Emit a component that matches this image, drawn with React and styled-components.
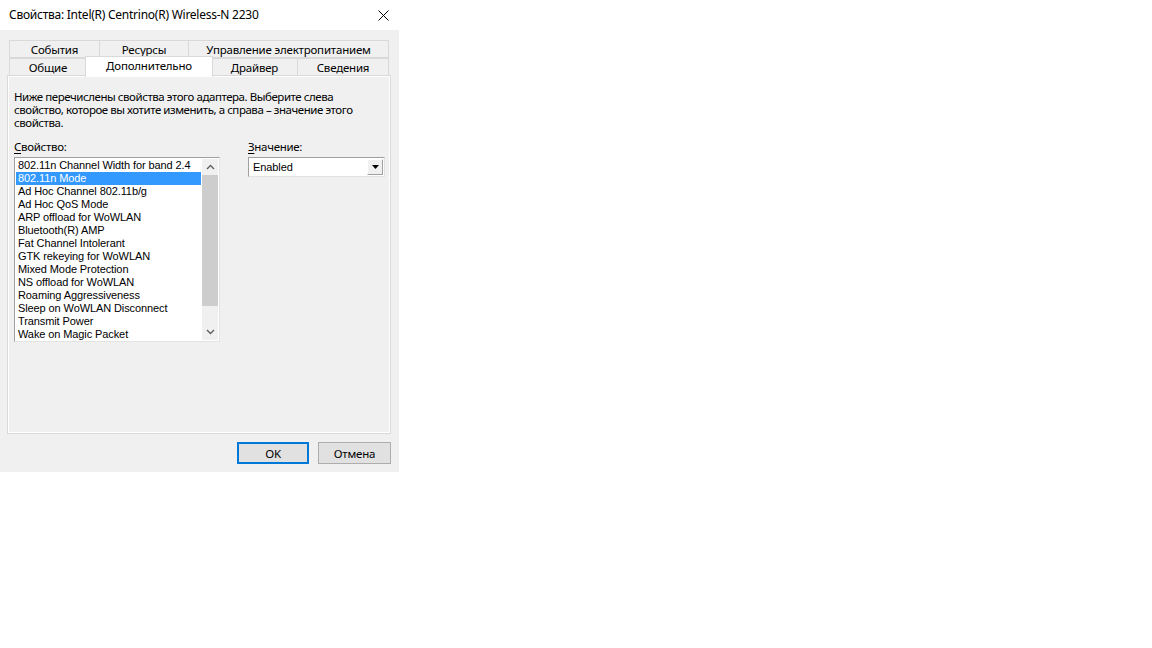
import React from "react";
import styled, { createGlobalStyle } from "styled-components";

const Global = createGlobalStyle`
  html, body { margin: 0; padding: 0; background: #ffffff; }
  body { font-family: "Noto Sans", "Liberation Sans", sans-serif; }
`;

const UI = `"Noto Sans", "Open Sans", "Liberation Sans", sans-serif`;
const DLG = `"Liberation Sans", Arial, sans-serif`;

const Window = styled.div`
  width: 399px;
  height: 472px;
  background: #f0f0f0;
  display: flex;
  flex-direction: column;
  box-sizing: border-box;
  font-family: ${UI};
  font-size: 11.5px;
  color: #000;
`;

const TitleBar = styled.div`
  height: 30px;
  background: #ffffff;
  display: flex;
  align-items: center;
  justify-content: space-between;
  padding: 0 9px;
  flex-shrink: 0;
`;

const TitleText = styled.span`
  font-size: 12px;
  letter-spacing: -0.25px;
  line-height: 16px;
`;

const CloseBtn = styled.div`
  width: 12px;
  height: 12px;
  margin-right: 1px;
  display: flex;
  align-items: center;
  justify-content: center;
`;

const Body = styled.div`
  flex: 1;
  display: flex;
  flex-direction: column;
  padding: 10px 8px 0 7px;
`;

const Tabs = styled.div`
  display: flex;
  flex-direction: column;
  padding-left: 2px;
  position: relative;
  z-index: 1;
`;

const TabRow = styled.div`
  display: flex;
  height: 18px;
  width: 380px;
`;

const Tab = styled.div`
  width: ${(p) => p.$w}px;
  box-sizing: border-box;
  height: ${(p) => (p.$active ? "21px" : "18px")};
  margin-top: ${(p) => (p.$active ? "-2px" : "0")};
  margin-left: ${(p) => (p.$active ? "-2px" : "0")};
  margin-right: ${(p) => (p.$active ? "-1px" : "0")};
  border: 1px solid #d9d9d9;
  border-bottom: ${(p) => (p.$active ? "none" : "1px solid #d9d9d9")};
  border-left: ${(p) => (p.$first || p.$active ? "1px solid #d9d9d9" : "none")};
  background: ${(p) => (p.$active ? "#ffffff" : "#f0f0f0")};
  display: flex;
  justify-content: center;
  align-items: ${(p) => (p.$active ? "flex-start" : "center")};
  padding-top: ${(p) => (p.$active ? "1px" : "0")};
  font-size: 11.5px;
  letter-spacing: -0.2px;
  line-height: 15px;
  white-space: nowrap;
  position: relative;
  z-index: ${(p) => (p.$active ? 2 : 1)};
`;

const Panel = styled.div`
  margin-top: -1px;
  height: 359px;
  box-sizing: border-box;
  border: 1px solid #d9d9d9;
  box-shadow: inset 1px 1px 0 #ffffff, inset -1px -1px 0 #ffffff;
  background: #f0f0f0;
  padding: 14px 6px 0 6px;
  display: flex;
  flex-direction: column;
`;

const Description = styled.p`
  margin: 0;
  width: 350px;
  font-size: 11.5px;
  letter-spacing: -0.45px;
  line-height: 13px;
`;

const Fields = styled.div`
  display: flex;
  margin-top: 11px;
  gap: 28px;
`;

const Field = styled.div`
  display: flex;
  flex-direction: column;
  gap: 3px;
`;

const Label = styled.span`
  font-size: 11.5px;
  letter-spacing: -0.3px;
  line-height: 14px;
  color: #000;
  u { text-decoration: underline; text-underline-offset: 2px; }
`;

const ListBox = styled.div`
  width: 206px;
  height: 185px;
  box-sizing: border-box;
  background: #ffffff;
  border-top: 1px solid #a0a0a0;
  border-left: 1px solid #a0a0a0;
  border-right: 1px solid #e3e3e3;
  border-bottom: 1px solid #e3e3e3;
  display: flex;
  padding: 1px 1px 1px 1px;
`;

const Items = styled.div`
  flex: 1;
  display: flex;
  flex-direction: column;
  overflow: hidden;
`;

const Item = styled.div`
  height: 13px;
  line-height: 13px;
  padding-left: 2px;
  font-family: ${DLG};
  font-size: 11px;
  letter-spacing: -0.1px;
  white-space: nowrap;
  background: ${(p) => (p.$selected ? "#3399ff" : "transparent")};
  color: ${(p) => (p.$selected ? "#ffffff" : "#000000")};
`;

const ScrollBar = styled.div`
  width: 16px;
  background: #f0f0f0;
  display: flex;
  flex-direction: column;
  margin-left: 1px;
`;

const ScrollArrow = styled.div`
  height: 16px;
  display: flex;
  align-items: center;
  justify-content: center;
`;

const ScrollTrack = styled.div`
  flex: 1;
  display: flex;
  flex-direction: column;
`;

const Thumb = styled.div`
  height: 131px;
  background: #cdcdcd;
`;

const Combo = styled.div`
  width: 137px;
  height: 20px;
  box-sizing: border-box;
  background: #ffffff;
  border-top: 1px solid #a0a0a0;
  border-left: 1px solid #a0a0a0;
  border-right: 1px solid #e3e3e3;
  border-bottom: 1px solid #e3e3e3;
  display: flex;
  align-items: center;
  padding: 1px;
`;

const ComboText = styled.span`
  flex: 1;
  padding-left: 3px;
  font-family: ${DLG};
  font-size: 11px;
  letter-spacing: -0.1px;
`;

const ComboButton = styled.div`
  width: 16px;
  height: 16px;
  box-sizing: border-box;
  background: #f0f0f0;
  border: 1px solid #ffffff;
  border-right-color: #a0a0a0;
  border-bottom-color: #a0a0a0;
  display: flex;
  align-items: center;
  justify-content: center;
`;

const Footer = styled.div`
  display: flex;
  justify-content: flex-end;
  gap: 9px;
  padding: 8px 0 0 0;
`;

const Button = styled.button`
  width: ${(p) => (p.$w ? p.$w : 73)}px;
  height: 22px;
  box-sizing: border-box;
  background: #e1e1e1;
  border: ${(p) => (p.$default ? "2px solid #0078d7" : "1px solid #adadad")};
  font-family: ${UI};
  font-size: 11.5px;
  letter-spacing: -0.2px;
  color: #000;
  padding: 0;
  display: flex;
  align-items: center;
  justify-content: center;
`;

const items = [
  "802.11n Channel Width for band 2.4",
  "802.11n Mode",
  "Ad Hoc Channel 802.11b/g",
  "Ad Hoc QoS Mode",
  "ARP offload for WoWLAN",
  "Bluetooth(R) AMP",
  "Fat Channel Intolerant",
  "GTK rekeying for WoWLAN",
  "Mixed Mode Protection",
  "NS offload for WoWLAN",
  "Roaming Aggressiveness",
  "Sleep on WoWLAN Disconnect",
  "Transmit Power",
  "Wake on Magic Packet",
];

export default function App() {
  return (
    <>
      <Global />
      <Window>
        <TitleBar>
          <TitleText>Свойства: Intel(R) Centrino(R) Wireless-N 2230</TitleText>
          <CloseBtn>
            <svg width="11" height="11" viewBox="0 0 11 11">
              <path d="M0.5 0.5 L10.5 10.5 M10.5 0.5 L0.5 10.5" stroke="#000" strokeWidth="1" />
            </svg>
          </CloseBtn>
        </TitleBar>
        <Body>
          <Tabs>
            <TabRow>
              <Tab $w={91} $first>События</Tab>
              <Tab $w={89}>Ресурсы</Tab>
              <Tab $w={200}>Управление электропитанием</Tab>
            </TabRow>
            <TabRow>
              <Tab $w={78} $first>Общие</Tab>
              <Tab $w={128} $active>Дополнительно</Tab>
              <Tab $w={86}>Драйвер</Tab>
              <Tab $w={91}>Сведения</Tab>
            </TabRow>
          </Tabs>
          <Panel>
            <Description>
              Ниже перечислены свойства этого адаптера. Выберите слева
              свойство, которое вы хотите изменить, а справа – значение этого
              свойства.
            </Description>
            <Fields>
              <Field>
                <Label><u>С</u>войство:</Label>
                <ListBox>
                  <Items>
                    {items.map((t, i) => (
                      <Item key={t} $selected={i === 1}>{t}</Item>
                    ))}
                  </Items>
                  <ScrollBar>
                    <ScrollArrow>
                      <svg width="9" height="6" viewBox="0 0 9 6">
                        <path d="M1 5 L4.5 1.5 L8 5" stroke="#606060" strokeWidth="1.4" fill="none" />
                      </svg>
                    </ScrollArrow>
                    <ScrollTrack>
                      <Thumb />
                    </ScrollTrack>
                    <ScrollArrow>
                      <svg width="9" height="6" viewBox="0 0 9 6">
                        <path d="M1 1 L4.5 4.5 L8 1" stroke="#606060" strokeWidth="1.4" fill="none" />
                      </svg>
                    </ScrollArrow>
                  </ScrollBar>
                </ListBox>
              </Field>
              <Field>
                <Label><u>З</u>начение:</Label>
                <Combo>
                  <ComboText>Enabled</ComboText>
                  <ComboButton>
                    <svg width="7" height="4" viewBox="0 0 7 4">
                      <path d="M0 0 L7 0 L3.5 4 Z" fill="#000" />
                    </svg>
                  </ComboButton>
                </Combo>
              </Field>
            </Fields>
          </Panel>
          <Footer>
            <Button $default $w={72}>OK</Button>
            <Button $w={73}>Отмена</Button>
          </Footer>
        </Body>
      </Window>
    </>
  );
}
